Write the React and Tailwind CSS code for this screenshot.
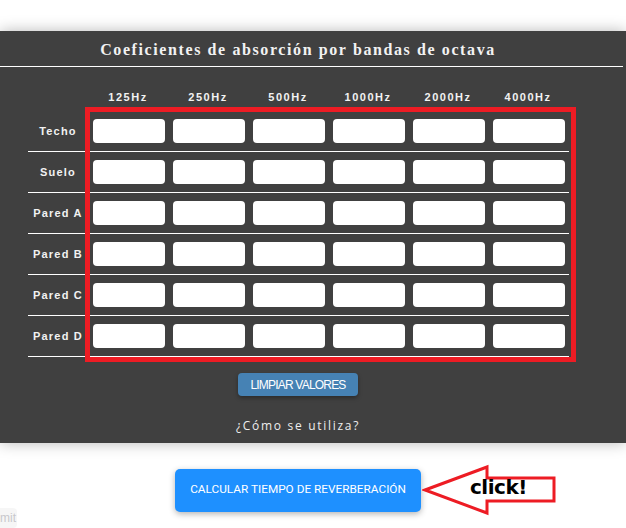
const bands = ["125Hz", "250Hz", "500Hz", "1000Hz", "2000Hz", "4000Hz"];
const surfaces = ["Techo", "Suelo", "Pared A", "Pared B", "Pared C", "Pared D"];

function ClickArrow() {
  return (
    <div className="relative w-[136px] h-[52px] ml-[1px]">
      <svg width="136" height="52" viewBox="0 0 136 52" className="absolute left-0 top-0">
        <polygon
          points="3,26 65,3 65,14 132,14 132,37 65,37 65,49"
          fill="white"
          stroke="#ed1c24"
          strokeWidth="3"
          strokeLinejoin="miter"
        />
      </svg>
      <span className="absolute left-[48px] top-[11px] font-['DejaVu_Sans',sans-serif] font-bold text-[20px] leading-[24px] tracking-[-0.5px] text-black">
        click!
      </span>
    </div>
  );
}

export default function App() {
  return (
    <div className="min-h-[528px] bg-white overflow-hidden font-['Liberation_Sans',Arial,sans-serif]">
      <div className="h-[31px]" />

      {/* panel */}
      <section className="bg-[#404040] shadow-[0_0_14px_rgba(0,0,0,0.28)] pt-[10px] pb-[9px] text-[#f2f2f2]">
        <h2 className="w-[596px] text-center font-['Liberation_Serif',serif] font-bold text-[16px] leading-[18px] tracking-[1.6px]">
          Coeficientes de absorción por bandas de octava
        </h2>
        <div className="mt-[7px] mr-[3px] h-px bg-white" />

        <div className="ml-[28px] w-[541px]">
          <div className="mt-[19px] grid grid-cols-[60px_repeat(6,80px)] h-[22px] items-center font-bold text-[11px] tracking-[1.5px]">
            <div />
            {bands.map((b) => (
              <div key={b} className="text-center">{b}</div>
            ))}
          </div>

          <div className="relative mt-[3px]">
            {surfaces.map((s) => (
              <div
                key={s}
                className="grid grid-cols-[60px_repeat(6,80px)] h-[41px] items-center border-b border-white"
              >
                <div className="text-center font-bold text-[11px] tracking-[1.2px]">{s}</div>
                {bands.map((b) => (
                  <div key={b} className="pl-[5px]">
                    <input
                      type="text"
                      className="block w-[72px] h-[24px] rounded-[4px] bg-white outline-none"
                    />
                  </div>
                ))}
              </div>
            ))}
            {/* red annotation box */}
            <div className="absolute left-[57px] top-[-4px] w-[491px] h-[255px] border-[5px] border-[#ed1c24] pointer-events-none" />
          </div>
        </div>

        <div className="w-[596px] mt-[16px] flex justify-center">
          <button className="w-[120px] h-[23px] rounded-[4px] bg-[#4682b4] text-white text-[12px] tracking-[-0.8px] shadow-[0_2px_4px_rgba(0,0,0,0.35)]">
            LIMPIAR VALORES
          </button>
        </div>

        <p className="w-[596px] mt-[22px] text-center font-['Open_Sans',sans-serif] text-[12px] leading-[16px] tracking-[1.7px] text-[#eeeeee]">
          ¿Cómo se utiliza?
        </p>
      </section>

      {/* bottom action */}
      <div className="mt-[21px] ml-[175px] flex items-center">
        <button className="w-[246px] h-[43px] rounded-[5px] bg-[#1e90ff] text-white font-['Roboto',sans-serif] text-[11.8px] shadow-[0_2px_6px_rgba(0,0,0,0.3)]">
          CALCULAR TIEMPO DE REVERBERACIÓN
        </button>
        <ClickArrow />
      </div>

      <div className="mt-[-8px] w-[17px] h-[20px] bg-[#f6f6f6] rounded-r-[4px] overflow-hidden flex justify-end items-center">
        <span className="whitespace-nowrap text-[12px] leading-[16px] text-[#c8c8cc] pr-[1px]">Submit</span>
      </div>
    </div>
  );
}
